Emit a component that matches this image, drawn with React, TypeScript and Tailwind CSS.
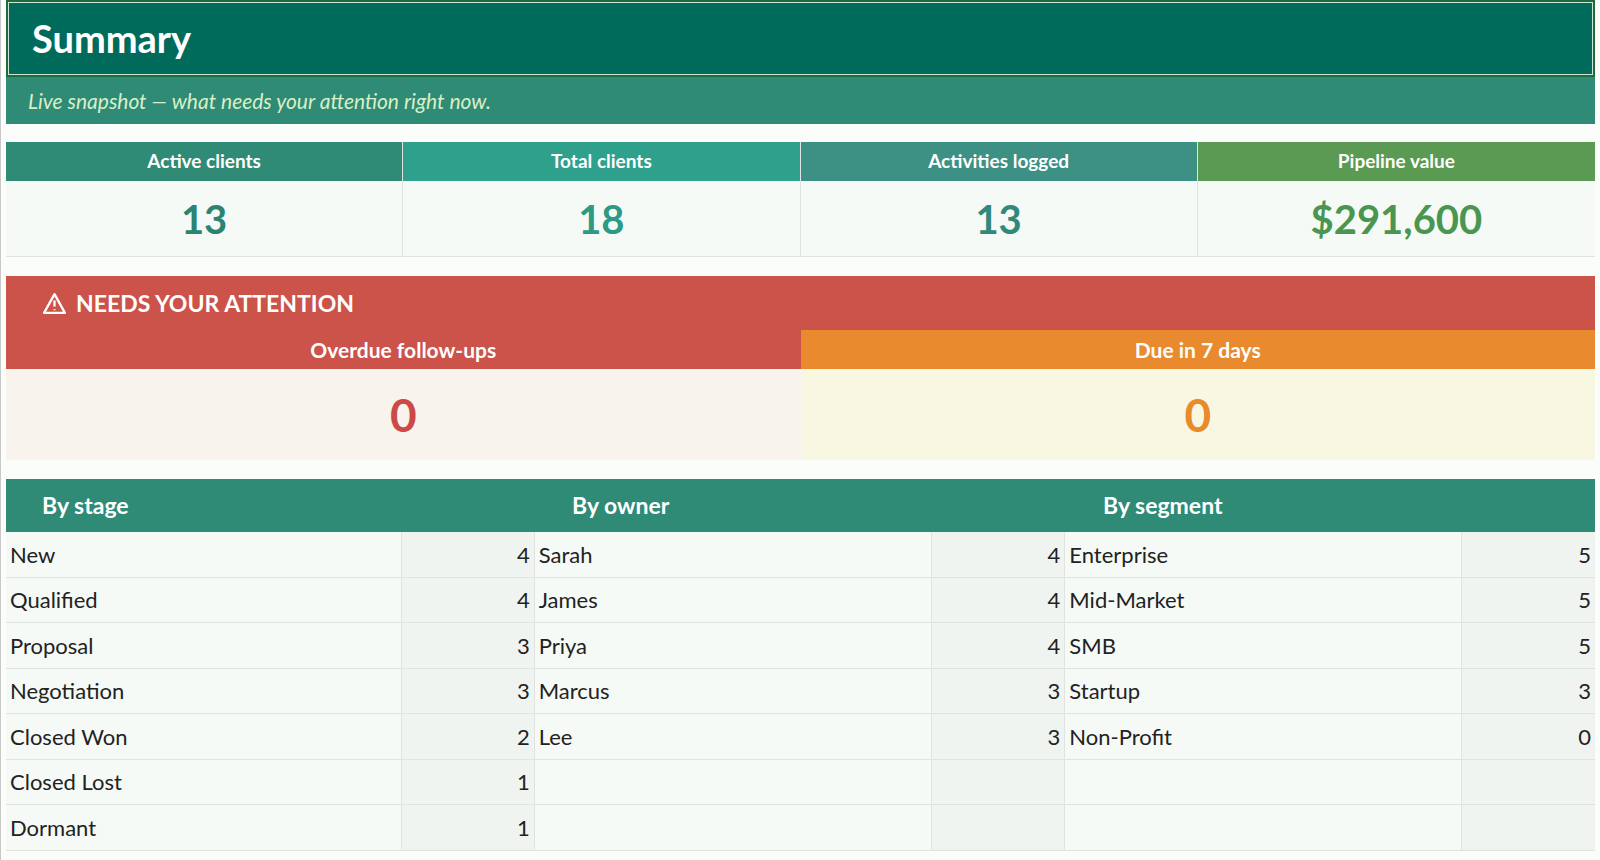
const kpis = [
  { label: "Active clients", value: "13", head: "bg-[#2f8a76]", color: "text-[#2a8471]" },
  { label: "Total clients", value: "18", head: "bg-[#2ea08c]", color: "text-[#2e9a86]" },
  { label: "Activities logged", value: "13", head: "bg-[#3c9184]", color: "text-[#2f8a7c]" },
  { label: "Pipeline value", value: "$291,600", head: "bg-[#5a9a52]", color: "text-[#4a9550]" },
];

const stages: [string, number][] = [
  ["New", 4], ["Qualified", 4], ["Proposal", 3], ["Negotiation", 3], ["Closed Won", 2], ["Closed Lost", 1], ["Dormant", 1],
];
const owners: [string, number][] = [["Sarah", 4], ["James", 4], ["Priya", 4], ["Marcus", 3], ["Lee", 3]];
const segments: [string, number][] = [["Enterprise", 5], ["Mid-Market", 5], ["SMB", 5], ["Startup", 3], ["Non-Profit", 0]];

function Pair({ item, wide, last }: { item?: [string, number]; wide: string; last?: boolean }) {
  return (
    <>
      <div className={`${wide} bg-[#f6faf6] border-r border-[#e0e4e0] px-1 flex items-center`}>{item?.[0]}</div>
      <div className={`w-[133px] bg-[#f0f4f0] ${last ? "" : "border-r border-[#e0e4e0]"} px-1 flex items-center justify-end`}>{item?.[1]}</div>
    </>
  );
}

export default function App() {
  return (
    <div className="w-[1600px] h-[860px] bg-[#fbfdfb] pl-[5px] pr-[5px] border-l border-[#c8c8c8] text-[#222]" style={{ fontFamily: "Lato, 'Open Sans', sans-serif" }}>
      <div className="h-[77px] bg-[#006b5a] border-[2px] border-[#1d6a3a] outline outline-1 -outline-offset-3 outline-[#cfe3d8] flex items-center pl-[24px]">
        <span className="text-white font-bold text-[38px]">Summary</span>
      </div>
      <div className="h-[47px] bg-[#2f8a76] flex items-center pl-[22px] italic text-[21px] text-[#d8f0c6]">
        Live snapshot — what needs your attention right now.
      </div>
      <div className="h-[18px]" />
      <div className="grid grid-cols-4">
        {kpis.map((k, i) => (
          <div key={k.label} className={i < 3 ? "border-r border-[#e0e4e0]" : ""}>
            <div className={`${k.head} h-[39px] flex items-center justify-center text-white font-bold text-[19px]`}>{k.label}</div>
            <div className={`h-[76px] bg-[#f6faf6] border-b border-[#e0e4e0] flex items-center justify-center font-bold text-[40px] ${k.color}`}>{k.value}</div>
          </div>
        ))}
      </div>
      <div className="h-[19px]" />
      <div className="h-[54px] bg-[#cc534a] flex items-center pl-[35px] gap-2 text-white font-bold text-[23px]">
        <svg width="27" height="25" viewBox="0 0 24 24" fill="none" stroke="white" strokeWidth="2.2" strokeLinejoin="round">
          <path d="M12 3 L22 21 H2 Z" />
          <path d="M12 9 V15" />
          <path d="M12 17.5 V18.5" />
        </svg>
        NEEDS YOUR ATTENTION
      </div>
      <div className="grid grid-cols-2">
        <div>
          <div className="h-[39px] bg-[#cc534a] flex items-center justify-center text-white font-bold text-[21px]">Overdue follow-ups</div>
          <div className="h-[91px] bg-[#f8f3ed] flex items-center justify-center text-[#cc4a44] font-bold text-[46px]">0</div>
        </div>
        <div>
          <div className="h-[39px] bg-[#ea8a2e] flex items-center justify-center text-white font-bold text-[21px]">Due in 7 days</div>
          <div className="h-[91px] bg-[#f8f7e1] flex items-center justify-center text-[#ea8a2e] font-bold text-[46px]">0</div>
        </div>
      </div>
      <div className="h-[19px]" />
      <div className="h-[53px] bg-[#2f8a76] flex items-center text-white font-bold text-[23px]">
        <div className="w-[529px] pl-[36px]">By stage</div>
        <div className="w-[531px] pl-[37px]">By owner</div>
        <div className="pl-[37px]">By segment</div>
      </div>
      {stages.map((s, i) => (
        <div key={s[0]} className="flex h-[45.5px] border-b border-[#e0e4e0] text-[22px]">
          <Pair item={s} wide="w-[396px]" />
          <Pair item={owners[i]} wide="w-[398px]" />
          <Pair item={segments[i]} wide="w-[397px]" last />
        </div>
      ))}
    </div>
  );
}
